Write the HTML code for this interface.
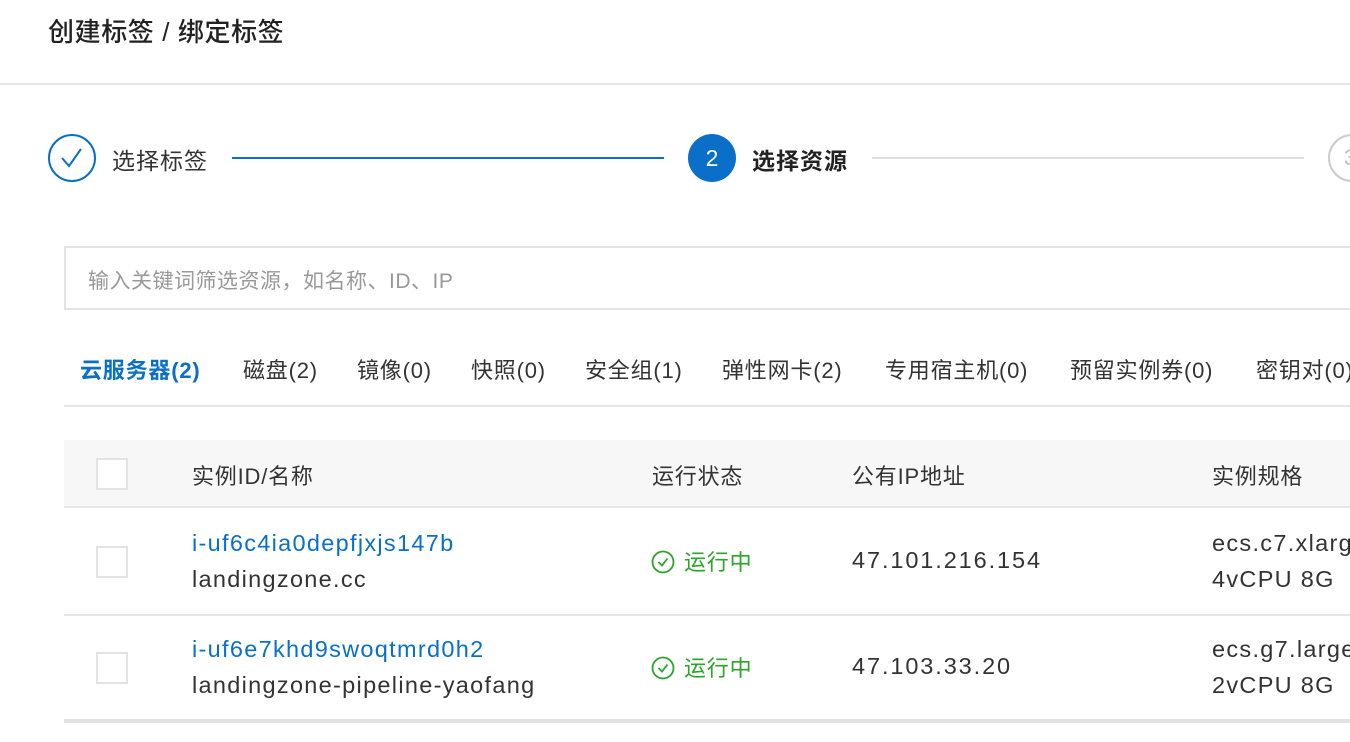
<!DOCTYPE html>
<html><head><meta charset="utf-8"><style>
*{margin:0;padding:0;box-sizing:border-box}
body{width:1350px;height:742px;overflow:hidden;background:#fff;font-family:"Liberation Sans","Noto Sans CJK SC",sans-serif;color:#333;position:relative}
.a{position:absolute;white-space:nowrap}
.cb{position:absolute;width:32px;height:32px;border:2px solid #e3e3e3;background:#fff}
.blue{color:#0a6fc9}
.ok{color:#2aa52a}
.t{font-size:22px;letter-spacing:0.8px}
.l{font-size:23.5px;letter-spacing:1.3px}
.n{font-size:23.5px;letter-spacing:1.9px}
</style></head><body>
<div class="a" style="left:48px;top:12px;font-size:26px;font-weight:500;color:#222;letter-spacing:0.6px">创建标签 / 绑定标签</div>
<div class="a" style="left:0;top:83px;width:1350px;height:2px;background:#e6e6e6"></div>

<svg class="a" style="left:47px;top:133px" width="52" height="52"><circle cx="25" cy="25" r="23" fill="none" stroke="#0a6fc9" stroke-width="2"/><path d="M15 25 L22 33 L34 16" fill="none" stroke="#0a6fc9" stroke-width="2"/></svg>
<div class="a" style="left:112px;top:142px;font-size:23px;letter-spacing:1px;color:#333">选择标签</div>
<div class="a" style="left:232px;top:157px;width:432px;height:2px;background:#0a6fc9"></div>
<div class="a" style="left:688px;top:134px;width:48px;height:48px;border-radius:50%;background:#0a6fc9;color:#fff;font-size:23px;text-align:center;line-height:48px">2</div>
<div class="a" style="left:752px;top:142px;font-size:23px;letter-spacing:1px;font-weight:700;color:#222">选择资源</div>
<div class="a" style="left:872px;top:157px;width:432px;height:2px;background:#ddd"></div>
<div class="a" style="left:1328px;top:134px;width:48px;height:48px;border-radius:50%;border:2px solid #ccc;color:#bbb;font-size:22px;line-height:44px;text-indent:14px">3</div>

<div class="a" style="left:64px;top:246px;width:1300px;height:64px;border:2px solid #e3e3e3"></div>
<div class="a" style="left:88px;top:265px;font-size:21px;letter-spacing:0.5px;color:#999">输入关键词筛选资源，如名称、ID、IP</div>

<div class="a t" style="left:80px;top:353px;font-weight:700"><span class="blue">云服务器(2)</span></div>
<div class="a t" style="left:243px;top:353px">磁盘(2)</div>
<div class="a t" style="left:357px;top:353px">镜像(0)</div>
<div class="a t" style="left:471px;top:353px">快照(0)</div>
<div class="a t" style="left:585px;top:353px">安全组(1)</div>
<div class="a t" style="left:722px;top:353px">弹性网卡(2)</div>
<div class="a t" style="left:885px;top:353px">专用宿主机(0)</div>
<div class="a t" style="left:1070px;top:353px">预留实例券(0)</div>
<div class="a t" style="left:1256px;top:353px">密钥对(0)</div>
<div class="a" style="left:64px;top:405px;width:1300px;height:2px;background:#e6e6e6"></div>

<div class="a" style="left:64px;top:440px;width:1300px;height:68px;background:#f7f7f7;border-bottom:2px solid #e6e6e6"></div>
<div class="cb" style="left:96px;top:458px"></div>
<div class="a t" style="left:192px;top:459px">实例ID/名称</div>
<div class="a t" style="left:652px;top:459px">运行状态</div>
<div class="a t" style="left:852px;top:459px">公有IP地址</div>
<div class="a t" style="left:1212px;top:459px">实例规格</div>

<div class="cb" style="left:96px;top:546px"></div>
<div class="a blue l" style="left:192px;top:530px">i-uf6c4ia0depfjxjs147b</div>
<div class="a l" style="left:192px;top:566px">landingzone.cc</div>
<svg class="a" style="left:651px;top:550px" width="24" height="24"><circle cx="12" cy="12" r="10.5" fill="none" stroke="#2aa52a" stroke-width="1.8"/><path d="M7.5 12 L11 15.5 L16.5 8.5" fill="none" stroke="#2aa52a" stroke-width="1.8"/></svg>
<div class="a ok t" style="left:684px;top:545px">运行中</div>
<div class="a n" style="left:852px;top:547px">47.101.216.154</div>
<div class="a l" style="left:1212px;top:530px">ecs.c7.xlarge</div>
<div class="a l" style="left:1212px;top:566px">4vCPU 8G</div>
<div class="a" style="left:64px;top:614px;width:1300px;height:2px;background:#e6e6e6"></div>

<div class="cb" style="left:96px;top:652px"></div>
<div class="a blue l" style="left:192px;top:636px">i-uf6e7khd9swoqtmrd0h2</div>
<div class="a l" style="left:192px;top:672px">landingzone-pipeline-yaofang</div>
<svg class="a" style="left:651px;top:656px" width="24" height="24"><circle cx="12" cy="12" r="10.5" fill="none" stroke="#2aa52a" stroke-width="1.8"/><path d="M7.5 12 L11 15.5 L16.5 8.5" fill="none" stroke="#2aa52a" stroke-width="1.8"/></svg>
<div class="a ok t" style="left:684px;top:651px">运行中</div>
<div class="a n" style="left:852px;top:653px">47.103.33.20</div>
<div class="a l" style="left:1212px;top:636px">ecs.g7.large</div>
<div class="a l" style="left:1212px;top:672px">2vCPU 8G</div>
<div class="a" style="left:64px;top:719px;width:1300px;height:4px;background:#e3e3e3"></div>
</body></html>
